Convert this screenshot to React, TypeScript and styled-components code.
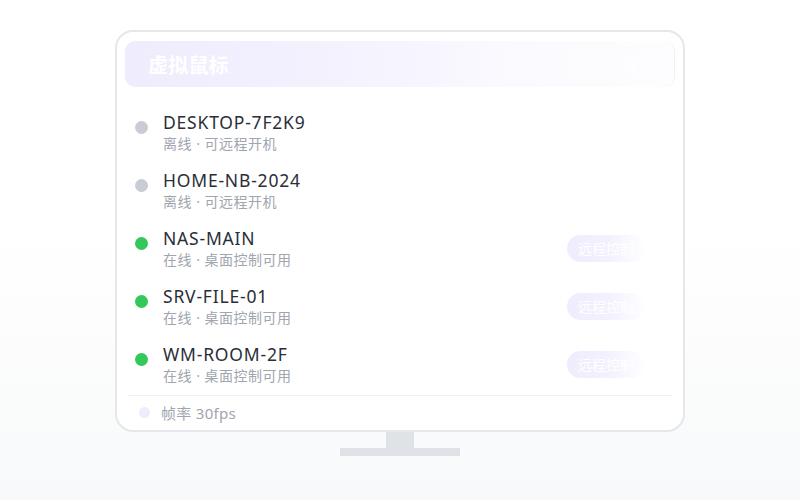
import React from 'react';
import styled, { createGlobalStyle } from 'styled-components';

interface Device {
  name: string;
  online: boolean;
}

const devices: Device[] = [
  { name: 'DESKTOP-7F2K9', online: false },
  { name: 'HOME-NB-2024', online: false },
  { name: 'NAS-MAIN', online: true },
  { name: 'SRV-FILE-01', online: true },
  { name: 'WM-ROOM-2F', online: true },
];

const GlobalStyle = createGlobalStyle`
  html, body {
    margin: 0;
    padding: 0;
  }
  body {
    font-family: "Noto Sans", "Noto Sans CJK SC", sans-serif;
  }
`;

const Page = styled.div`
  width: 800px;
  height: 500px;
  box-sizing: border-box;
  padding-top: 30px;
  display: flex;
  flex-direction: column;
  align-items: center;
  background: linear-gradient(180deg, #ffffff 0%, #ffffff 45%, #f8f9fa 100%);
  overflow: hidden;
`;

const Monitor = styled.div`
  width: 570px;
  height: 402px;
  box-sizing: border-box;
  border: 2px solid #e5e7eb;
  border-radius: 18px;
  background: #ffffff;
  padding: 9px 8px 0;
  display: flex;
  flex-direction: column;
`;

const Header = styled.div`
  height: 46px;
  border-radius: 10px;
  background: linear-gradient(90deg, #efecfd 0%, #f3f1fe 35%, #fbfbff 75%, #fdfdff 100%);
  border-right: 1px solid #f0f0f4;
  display: flex;
  align-items: center;
  justify-content: space-between;
  padding: 0 20px 0 23px;
`;

const Title = styled.span`
  color: #ffffff;
  font-size: 20px;
  font-weight: 700;
  letter-spacing: 0.2px;
`;

const HeaderHint = styled.span`
  color: #ffffff;
  font-size: 17px;
  font-weight: 700;
  opacity: 0.9;
`;

const List = styled.div`
  margin-top: 16px;
  display: flex;
  flex-direction: column;
`;

const Row = styled.div`
  height: 58px;
  display: flex;
  align-items: center;
  padding: 0 30px 0 10px;
`;

const Dot = styled.span<{ $online: boolean }>`
  width: 13px;
  height: 13px;
  border-radius: 50%;
  flex-shrink: 0;
  background: ${(p) => (p.$online ? '#34c759' : '#c9ccd4')};
  margin: 0 15px 9px 0;
`;

const Info = styled.div`
  flex: 1;
  display: flex;
  flex-direction: column;
`;

const Name = styled.div`
  font-size: 17.5px;
  line-height: 22px;
  color: #2a2e37;
  letter-spacing: 0.8px;
`;

const Sub = styled.div`
  font-size: 14px;
  line-height: 20px;
  margin-top: 1px;
  color: #a0a5ae;
  letter-spacing: 0.5px;
`;

const ControlButton = styled.button`
  width: 78px;
  height: 27px;
  border: none;
  border-radius: 14px;
  background: linear-gradient(90deg, #efecfd 0%, #f3f1fe 55%, #ffffff 100%);
  color: #ffffff;
  font-family: "Noto Sans CJK SC", sans-serif;
  font-size: 14px;
  text-align: left;
  padding: 0 0 0 11px;
`;

const Divider = styled.div`
  height: 1px;
  background: #eef0f3;
  margin: 2px 2px 0;
`;

const Footer = styled.div`
  height: 33px;
  display: flex;
  align-items: center;
  padding-left: 14px;
`;

const FpsDot = styled.span`
  width: 11px;
  height: 11px;
  border-radius: 50%;
  background: #efecfd;
  margin-right: 11px;
`;

const FpsText = styled.span`
  font-size: 15px;
  color: #a0a5ae;
  letter-spacing: 0.3px;
`;

const Neck = styled.div`
  width: 28px;
  height: 16px;
  background: #dfe3e7;
`;

const Base = styled.div`
  width: 120px;
  height: 8px;
  background: #dfe3e7;
`;

const App: React.FC = () => {
  return (
    <Page>
      <GlobalStyle />
      <Monitor>
        <Header>
          <Title>虚拟鼠标</Title>
          <HeaderHint>设置</HeaderHint>
        </Header>
        <List>
          {devices.map((d) => (
            <Row key={d.name}>
              <Dot $online={d.online} />
              <Info>
                <Name>{d.name}</Name>
                <Sub>{d.online ? '在线 · 桌面控制可用' : '离线 · 可远程开机'}</Sub>
              </Info>
              {d.online && <ControlButton>远程控制</ControlButton>}
            </Row>
          ))}
        </List>
        <Divider />
        <Footer>
          <FpsDot />
          <FpsText>帧率 30fps</FpsText>
        </Footer>
      </Monitor>
      <Neck />
      <Base />
    </Page>
  );
};

export default App;
